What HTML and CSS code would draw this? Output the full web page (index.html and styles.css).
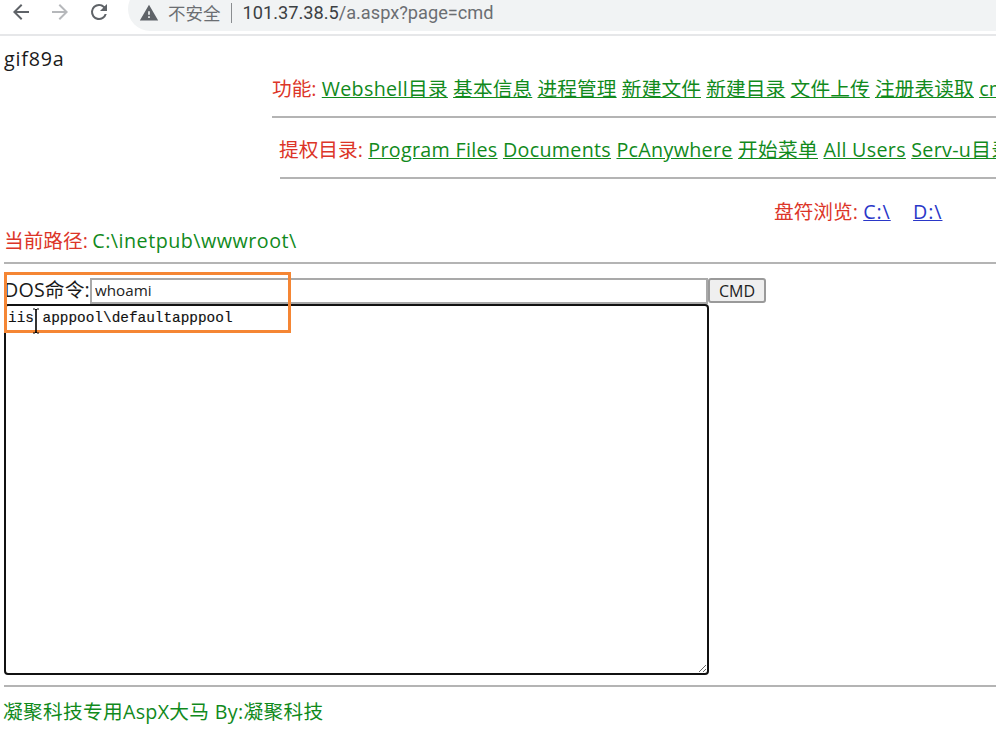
FILE: index.html
```html
<!DOCTYPE html>
<html lang="zh">
<head>
<meta charset="utf-8">
<title>a.aspx</title>
<link rel="stylesheet" href="styles.css">
</head>
<body>
<header class="toolbar">
  <svg class="tool" viewBox="0 0 24 24"><path d="M20 11H7.8l5.6-5.6L12 4l-8 8 8 8 1.4-1.4L7.8 13H20z" fill="#5f6368"/></svg>
  <svg class="tool" viewBox="0 0 24 24"><path d="M20 11H7.8l5.6-5.6L12 4l-8 8 8 8 1.4-1.4L7.8 13H20z" fill="#b6b8bb" transform="rotate(180 12 12)"/></svg>
  <svg class="tool" viewBox="0 0 24 24"><path d="M17.65 6.35A7.96 7.96 0 0 0 12 4a8 8 0 1 0 7.73 10h-2.08A6 6 0 1 1 12 6c1.66 0 3.14.69 4.22 1.78L13 11h7V4z" fill="#5f6368"/></svg>
  <div class="omnibox">
    <svg class="warn" viewBox="0 0 24 24"><path d="M1 21h22L12 2zm12-3h-2v-2h2zm0-4h-2v-4h2z" fill="#5f6368"/></svg>
    <span class="insecure">不安全</span>
    <span class="sep"></span>
    <span class="host">101.37.38.5</span><span class="path">/a.aspx?page=cmd</span>
  </div>
</header>
<main class="page">
  <div class="magic">gif89a</div>
  <section class="nav nav-first">
    <span class="label">功能:</span>
    <a href="#" class="wide">Webshell目录</a> <a href="#">基本信息</a> <a href="#">进程管理</a> <a href="#">新建文件</a> <a href="#">新建目录</a> <a href="#">文件上传</a> <a href="#">注册表读取</a> <a href="#">cmd命令</a>
  </section>
  <hr class="rule rule-first">
  <section class="nav nav-second">
    <span class="label">提权目录:</span>
    <a href="#">Program Files</a> <a href="#">Documents</a> <a href="#">PcAnywhere</a> <a href="#">开始菜单</a> <a href="#">All Users</a> <a href="#">Serv-u目录</a>
  </section>
  <hr class="rule rule-second">
  <section class="drives">
    <span class="label">盘符浏览:</span>
    <a href="#" class="drive">C:\</a>
    <a href="#" class="drive drive-d">D:\</a>
  </section>
  <div class="current"><span class="label">当前路径:</span> <span class="cwd">C:\inetpub\wwwroot\</span></div>
  <hr class="rule rule-full">
  <form class="cmd">
    <div class="cmd-row">
      <label class="cmd-label" for="c">DOS命令:</label><input id="c" class="cmd-input" value="whoami"><button type="button" class="cmd-btn">CMD</button>
    </div>
    <textarea class="output" readonly>iis apppool\defaultapppool</textarea>
  </form>
  <hr class="rule rule-full rule-foot">
  <footer class="foot">凝聚科技专用AspX大马 By:凝聚科技</footer>
</main>
<div class="highlight"></div>
<svg class="ibeam" viewBox="0 0 8 26"><path d="M1 1h2l1 1 1-1h2M1 25h2l1-1 1 1h2" fill="none" stroke="#000" stroke-width="1"/><path d="M4 2v22" fill="none" stroke="#000" stroke-width="1.6"/></svg>
</body>
</html>
```
FILE: styles.css
```css
html, body { margin: 0; padding: 0; height: 736px; overflow: hidden; background: #fff; }
body { font-family: "Open Sans", "Noto Sans CJK SC", sans-serif; font-size: 19.7px; letter-spacing: 0.2px; color: #1a1a1a; }

.toolbar { display: flex; align-items: center; height: 34px; border-bottom: 2px solid #e6e7e9; padding-left: 9px; overflow: hidden; letter-spacing: 0; }
.tool { width: 24px; height: 24px; margin-right: 15px; flex: none; margin-top: -11px; }
.omnibox { display: flex; align-items: center; flex: none; height: 44px; margin: -16px 0 0 2px; padding: 8px 0 0 11px; width: 900px; border-radius: 22px; background: #f1f3f4; font-family: "Roboto", "Noto Sans CJK SC", sans-serif; font-size: 18.2px; line-height: 1; box-sizing: border-box; }
.warn { width: 20px; height: 20px; margin-right: 9px; flex: none; }
.insecure { color: #6b6e72; font-size: 17.5px; font-family: "Noto Sans CJK SC", sans-serif; }
.sep { width: 1px; height: 20px; background: #8a8d90; margin: 0 11px 0 10px; }
.host { color: #3c4043; }
.path { color: #6b6e72; }

.page { padding: 0 0 0 4px; white-space: nowrap; line-height: 26px; }
.magic { margin-top: 10px; letter-spacing: 0.8px; }
.label { color: #dc3528; letter-spacing: 0; }
a { color: #118a1c; }
.nav-first { margin: 4px 0 0 268px; letter-spacing: 0.1px; }
.wide { letter-spacing: 0.3px; }
.nav-second { margin: 19px 0 0 275px; letter-spacing: 0.3px; }
.rule { border: 0; height: 2px; background: #b4b4b4; margin: 0; }
.rule-first { margin: 14px 0 0 268px; }
.rule-second { margin: 14px 0 0 276px; }
.drives { margin: 20px 0 0 770px; }
.drive { color: #2a37c8; letter-spacing: 0.9px; }
.drive-d { margin-left: 17px; }
.current { margin-top: 3px; }
.cwd { color: #118a1c; letter-spacing: 0.5px; margin-left: -1px; }
.rule-full { margin-top: 8px; }
.cmd { margin: 14px 0 0; }
.cmd-row { display: flex; align-items: flex-start; height: 26px; }
.cmd-label { width: 86px; flex: none; margin-top: -1px; letter-spacing: 0.15px; }
.cmd-input { width: 618px; height: 26px; box-sizing: border-box; border: 2px solid #a9a9a9; border-radius: 0; padding: 0 3px 3px; font: 15.2px "Open Sans", sans-serif; color: #222; outline: 0; }
.cmd-btn { width: 58px; height: 25px; box-sizing: border-box; border: 2px solid #9a9a9a; border-radius: 3px; background: #efefef; font: 16px "Open Sans", sans-serif; color: #222; padding: 0 0 4px; }
.output { display: block; width: 705px; height: 371px; box-sizing: border-box; border: 2px solid #111; border-radius: 4px; padding: 2px; margin: 0; font: 14.4px/20px "Liberation Mono", monospace; -webkit-text-stroke: 0.15px #111; outline: 0; color: #111; resize: both; }
.rule-foot { margin-top: 10px; }
.foot { margin-top: 12px; margin-left: -1px; color: #118a1c; letter-spacing: 0.3px; }

.highlight { position: absolute; left: 4px; top: 272px; width: 287px; height: 61px; box-sizing: border-box; border: 3px solid #f58634; }
.ibeam { position: absolute; left: 32px; top: 308px; width: 8px; height: 26px; }
```
